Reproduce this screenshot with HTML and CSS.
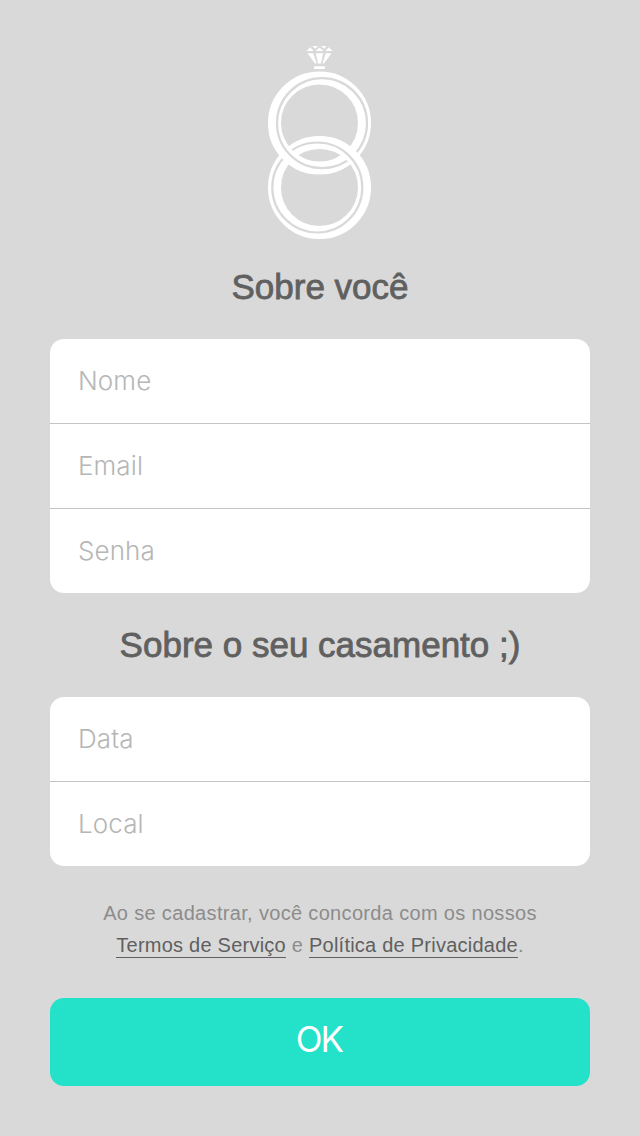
FILE: index.html
```html
<!DOCTYPE html>
<html lang="pt-BR">
  <head>
    <meta charset="UTF-8" />
    <meta name="viewport" content="width=device-width, initial-scale=1" />
    <title>Cadastro</title>
    <link rel="stylesheet" href="styles.css">
  </head>
  <body>
    <main class="container">
      <svg class="logo" width="104" height="196" viewBox="268 45 104 196" fill="none">
        <defs>
          <clipPath id="cruzamento">
            <rect x="264" y="134" width="42" height="46" />
          </clipPath>
        </defs>

        <!-- diamante -->
        <g fill="#fff">
          <path d="M310.300 47.200l3.200 3.800h-7zM319.500 47.500l4 3.500h-8zM328.700 47.200l3.800 3.800h-7zM312.500 46h5.500l-3 2.800zM321 46h5.500l-2.500 2.800z" />
          <path d="M307.500 53.300h5.800l3.200 10.200h-1.500zM315.800 53.300h7.400l-2.200 10.200h-3zM325.700 53.300h5.800l-7.500 10.200h-1.500z" />
          <path d="M314 66.300h11v2.700h-11z" />
        </g>

        <!-- anel de cima -->
        <g id="anel-cima">
          <circle cx="319.500" cy="123" r="45" stroke="#fff" stroke-width="13" />
          <circle cx="322" cy="123.200" r="45" stroke="#d9d9d9" stroke-width="2.200" />
        </g>

        <!-- anel de baixo -->
        <circle cx="319.500" cy="187.500" r="45" stroke="#fff" stroke-width="13" />
        <circle cx="317.300" cy="187.500" r="45" stroke="#d9d9d9" stroke-width="2.200" />

        <!-- no lado esquerdo o anel de cima passa na frente -->
        <use href="#anel-cima" clip-path="url(#cruzamento)" />
      </svg>

      <form class="cadastro">
        <h1>Sobre você</h1>
        <div class="campos">
          <input type="text" name="nome" placeholder="Nome" />
          <input type="email" name="email" placeholder="Email" />
          <input type="password" name="senha" placeholder="Senha" />
        </div>

        <h2>Sobre o seu casamento ;)</h2>
        <div class="campos">
          <input type="text" name="data" placeholder="Data" />
          <input type="text" name="local" placeholder="Local" />
        </div>

        <p class="termos">
          <span class="aviso">Ao se cadastrar, você concorda com os nossos</span><br />
          <a href="#">Termos de Serviço</a> e
          <a href="#">Política de Privacidade</a>.
        </p>

        <button type="submit">OK</button>
      </form>
    </main>
  </body>
</html>
```
FILE: styles.css
```css
* {
  box-sizing: border-box;
}

body {
  font-family: "Liberation Sans", Arial, sans-serif;
  margin: 0;
  background: #d9d9d9;
  color: #606060;
}

.container {
  width: 540px;
  margin: 0 auto;
  padding-top: 45px;
}

.logo {
  display: block;
  margin: 0 auto;
}

h1,
h2 {
  margin: 0;
  height: 98px;
  line-height: 92px;
  font-size: 35px;
  font-weight: normal;
  text-align: center;
  white-space: nowrap;
  -webkit-text-stroke: 0.8px #606060;
}

h2 {
  height: 104px;
  line-height: 104px;
}

.campos {
  background: white;
  border-radius: 14px;
  overflow: hidden;
}

.campos input {
  display: block;
  width: 100%;
  height: 84px;
  padding: 0 28px 2px;
  border: none;
  background: none;
  font-family: Inter, sans-serif;
  font-size: 26px;
  font-weight: 300;
  letter-spacing: 0.1px;
  outline: none;
}

.campos input + input {
  height: 85px;
  border-top: 1px solid #c4c4c4;
}

.campos input::placeholder {
  color: #b6b6b6;
}

.termos {
  margin: 31px 0 37px;
  font-size: 20px;
  line-height: 32px;
  letter-spacing: 0.24px;
  text-align: center;
  color: #8c8c8c;
}

.aviso {
  letter-spacing: 0.33px;
}

.termos a {
  color: #606060;
  text-decoration: none;
  border-bottom: 1px solid #606060;
  padding-bottom: 1px;
}

button {
  display: block;
  width: 100%;
  height: 88px;
  padding: 0 2px 6px 0;
  border: none;
  border-radius: 14px;
  background: #24e2ca;
  color: white;
  font-family: Inter, sans-serif;
  font-size: 35px;
  font-weight: 400;
  letter-spacing: -1.8px;
  cursor: pointer;
}
```
